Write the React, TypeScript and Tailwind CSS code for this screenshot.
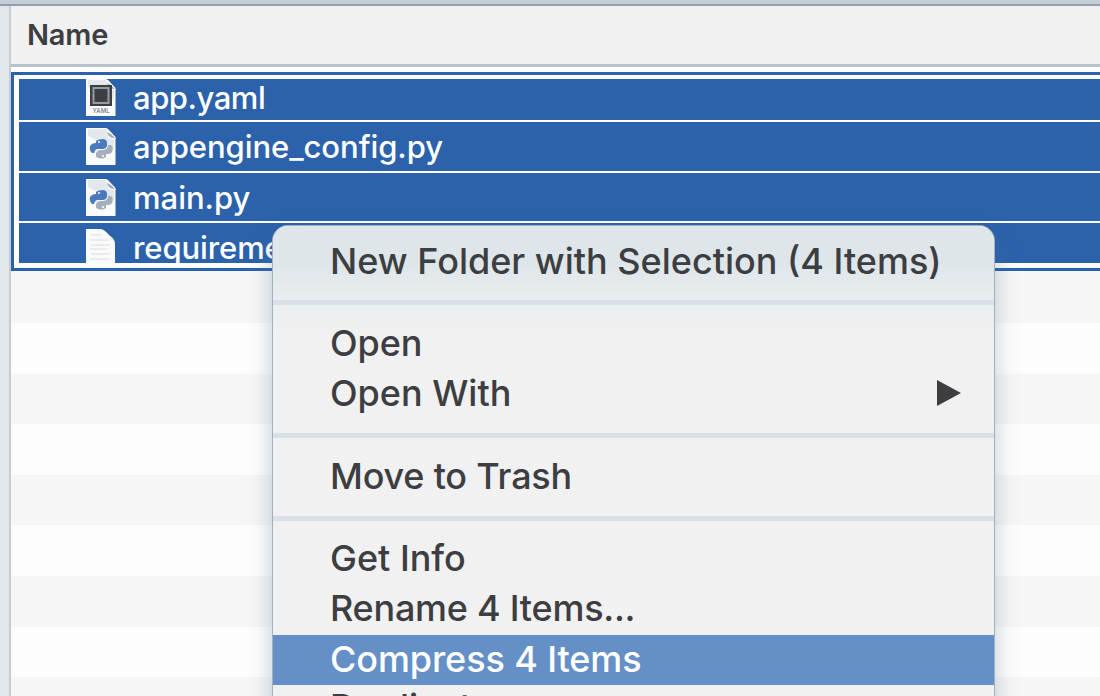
import React from "react";

const files = [
  { name: "app.yaml", kind: "yaml", spacing: "tracking-[-0.45px]" },
  { name: "appengine_config.py", kind: "python", spacing: "tracking-[-0.05px]" },
  { name: "main.py", kind: "python", spacing: "tracking-[0px]" },
  { name: "requirements.txt", kind: "text", spacing: "tracking-[-0.1px]" },
];

function FileIcon({ kind }: { kind: string }) {
  return (
    <svg width="30" height="38" viewBox="0 0 30 38" className="shrink-0">
      {kind === "text" ? (
        <>
          <path d="M0 0H15Q19 1 23 6Q28 9 29 14V38H0Z" fill="#fafafa" />
          <path d="M5 6H15M4 11H22M5 16H24M4 20H21M5 25H24M4 30H23" stroke="#e8ecee" strokeWidth="2" />
        </>
      ) : (
        <>
          <path d="M0 0H20L29.5 10V37H0Z" fill="#fafafa" />
          <path d="M2 1H20L22 10L28 11V21L2 8Z" fill="#e2e8ec" />
          <path d="M20 0Q22 8 29.5 11V9L22 1Z" fill="#fff" />
          <path d="M21 4Q22 10 29 10L25 6Z" fill="#a3adba" />
        </>
      )}
      {kind === "yaml" && (
        <>
          <rect x="4" y="6" width="22" height="21" fill="#3c3e42" />
          <rect x="7.5" y="9" width="15" height="15" fill="#3c3e42" stroke="#939ba7" strokeWidth="2" />
          <text x="6.5" y="34" fontFamily="Inter, sans-serif" fontSize="6" fontWeight="600" fill="#7c8795">YAML</text>
        </>
      )}
      {kind === "python" && (
        <>
          <path d="M10 15V13Q12 11 18 11Q21 12 21 15V18Q20 21 17 21H12Q9 21 8 25H6Q3 22 4 18Q6 15 10 15Z" fill="#4a7abb" />
          <path d="M22 17H25Q28 20 26 24Q25 26 20 26V29Q16 32 10 29V25Q11 22 15 22H18Q22 21 22 17Z" fill="#a6b0bd" />
          <path d="M12 14H14M16 28H18" stroke="#fff" strokeWidth="1.5" />
        </>
      )}
    </svg>
  );
}

const item = "flex shrink-0 items-center whitespace-nowrap pl-[57px] text-[36px] font-[450] leading-[50px] text-[#3c3e42]";

function Separator() {
  return <div className="h-[5px] w-full shrink-0 bg-[#d9e0e7]" />;
}

export default function App() {
  return (
    <div className="relative flex h-[696px] w-[1100px] flex-col overflow-hidden bg-[#fdfdfd] font-['Inter',sans-serif]">
      <div className="h-[6px] shrink-0 border-b-2 border-[#949dab] bg-[#c5cdd8]" />
      <div className="flex h-[690px]">
        <div className="w-[11px] shrink-0 border-r-2 border-[#c4ccd6] bg-[#e1e7eb]" />
        <div className="flex w-[1089px] flex-col">
          <div className="flex h-[61px] shrink-0 items-center border-b-[3px] border-[#bac2cc] bg-[#f1f1f1] pl-4">
            <span className="text-[29px] font-semibold leading-[58px] tracking-[-0.2px] text-[#3c3e42]">Name</span>
          </div>
          <div className="h-[5px] shrink-0 bg-white" />
          <div className="flex h-[199px] shrink-0 flex-col border-y-[3px] border-l-[3px] border-[#2c62ac] bg-[#2c62ac]">
            <div className="flex h-[193px] flex-col overflow-hidden border-b-[5px] border-l-[5px] border-t-[4px] border-white">
              {files.map((f, i) => (
                <div
                  key={f.name}
                  className={
                    i === 0
                      ? "flex h-[43px] shrink-0 items-start border-b-2 border-white bg-[#2c62ac] pl-[67px]"
                      : "flex h-[50.5px] shrink-0 items-start border-b-2 border-white bg-[#2c62ac] pl-[67px] pt-[6px]"
                  }
                >
                  <FileIcon kind={f.kind} />
                  <span className={"-mt-px ml-[17px] whitespace-nowrap text-[31px] font-medium leading-[40px] text-white " + f.spacing}>{f.name}</span>
                </div>
              ))}
            </div>
          </div>
          <div className="flex flex-col">
            {[0, 1, 2, 3, 4, 5, 6, 7, 8].map((i) => (
              <div
                key={i}
                className={
                  i === 0
                    ? "h-[52px] shrink-0 bg-[#f6f6f6]"
                    : i % 2
                      ? "h-[50.6px] shrink-0 bg-[#fdfdfd]"
                      : "h-[50.6px] shrink-0 bg-[#f6f6f6]"
                }
              />
            ))}
          </div>
        </div>
      </div>

      <div className="absolute left-[273px] top-[226px] flex h-[500px] w-[721px] flex-col overflow-hidden rounded-t-[15px] bg-[#f1f1f1] shadow-[0_0_0_1px_#a5b0be,0_14px_24px_rgba(70,110,140,0.38)]">
        <div className="flex h-[74px] shrink-0 flex-col bg-linear-to-b from-[#dfe6e9] from-50% to-[#e9edef] pt-[10px]">
          <div className={item}>New Folder with Selection (4 Items)</div>
        </div>
        <Separator />
        <div className="flex h-[128px] shrink-0 flex-col bg-linear-to-b from-[#ebeff0] to-[#f1f1f1] to-25% pt-[13px]">
          <div className={item + " tracking-[-0.1px]"}>Open</div>
          <div className={item + " justify-between pr-[32px]"}>
            <span>Open With</span>
            <svg width="25" height="26" viewBox="0 0 25 26"><path d="M0 0L24 13L0 26Z" fill="#3c3e42" /></svg>
          </div>
        </div>
        <Separator />
        <div className="flex h-[78px] shrink-0 flex-col pt-[13px]">
          <div className={item + " tracking-[-0.2px]"}>Move to Trash</div>
        </div>
        <Separator />
        <div className="flex shrink-0 flex-col pt-[12px]">
          <div className={item}>Get Info</div>
          <div className={item + " tracking-[-0.25px]"}>Rename 4 Items...</div>
          <div className="mt-[2px] flex h-[50px] shrink-0 items-center whitespace-nowrap bg-[#648fc7] pl-[57px] text-[36px] font-[450] leading-[50px] tracking-[-0.1px] text-white">
            <span className="-mt-[2px]">Compress 4 Items</span>
          </div>
          <div className={item + " -mt-[3px]"}>Duplicate</div>
        </div>
      </div>
    </div>
  );
}
